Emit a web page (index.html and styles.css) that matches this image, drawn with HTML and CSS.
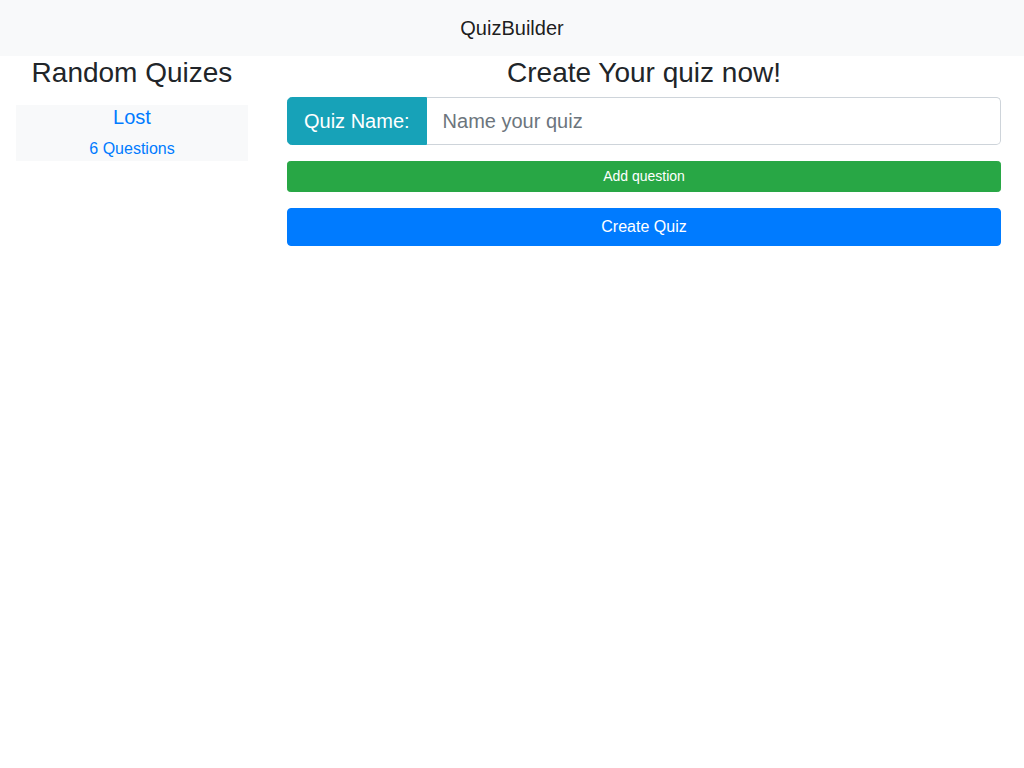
FILE: index.html
```html
<!DOCTYPE html>
<html>
<head>
<meta charset="utf-8">
<title>QuizBuilder</title>
<link rel="stylesheet" href="styles.css">
</head>
<body>
<nav class="navbar"><span class="brand">QuizBuilder</span></nav>
<main class="layout">
  <aside class="side">
    <h3 class="title">Random Quizes</h3>
    <div class="quiz-card">
      <h5 class="quiz-name">Lost</h5>
      <p class="quiz-count">6 Questions</p>
    </div>
  </aside>
  <section class="main">
    <h3 class="title">Create Your quiz now!</h3>
    <div class="input-group">
      <span class="prepend">Quiz Name:</span>
      <input class="field" type="text" placeholder="Name your quiz">
    </div>
    <button class="btn btn-add">Add question</button>
    <button class="btn btn-create">Create Quiz</button>
  </section>
</main>
</body>
</html>
```
FILE: styles.css
```css
* { box-sizing: border-box; }
body {
  margin: 0;
  font-family: "Liberation Sans", Arial, sans-serif;
  font-size: 16px;
  line-height: 1.5;
  color: #212529;
  background: #fff;
}
.navbar {
  height: 56px;
  background: #f8f9fa;
  display: flex;
  align-items: center;
  justify-content: center;
}
.brand {
  font-size: 20px;
  line-height: 30px;
  color: rgba(0,0,0,.9);
}
.layout {
  display: flex;
  gap: 39px;
  padding: 0 23px 0 16px;
}
.side { width: 232px; flex: none; }
.main { flex: 1; display: flex; flex-direction: column; }
.title {
  margin: 0 0 8px;
  font-size: 28px;
  font-weight: 500;
  line-height: 33px;
  text-align: center;
}
.quiz-card {
  margin-top: 16px;
  background: #f8f9fa;
  text-align: center;
  color: #007bff;
}
.quiz-name {
  margin: 0 0 8px;
  font-size: 20px;
  font-weight: 400;
  line-height: 24px;
}
.quiz-count { margin: 0; line-height: 24px; }
.input-group { display: flex; height: 48px; }
.prepend {
  background: #17a2b8;
  color: #fff;
  font-size: 20px;
  line-height: 30px;
  padding: 8px 16px;
  border: 1px solid #17a2b8;
  border-radius: 4.8px 0 0 4.8px;
}
.field {
  flex: 1;
  min-width: 0;
  font-family: inherit;
  font-size: 20px;
  padding: 8px 16px;
  border: 1px solid #ced4da;
  border-left: 0;
  border-radius: 0 4.8px 4.8px 0;
  color: #495057;
  outline: none;
}
.field::placeholder { color: #6c757d; }
.btn {
  display: block;
  width: 100%;
  border: 1px solid transparent;
  color: #fff;
  font-family: inherit;
  margin-top: 16px;
  cursor: pointer;
}
.btn-add {
  background: #28a745;
  border-color: #28a745;
  font-size: 14px;
  line-height: 21px;
  padding: 4px 8px;
  border-radius: 3.2px;
}
.btn-create {
  background: #007bff;
  border-color: #007bff;
  font-size: 16px;
  line-height: 24px;
  padding: 6px 12px;
  border-radius: 4px;
}
```
